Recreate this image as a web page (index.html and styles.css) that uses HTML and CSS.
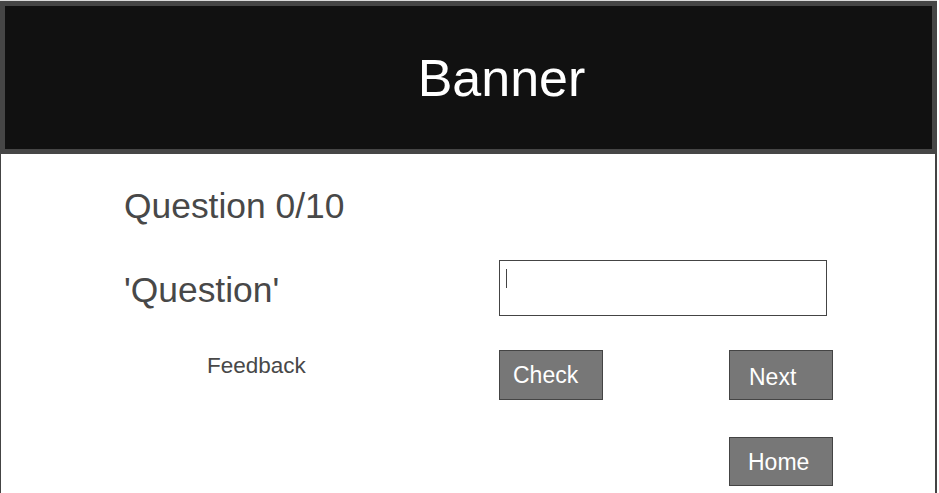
FILE: index.html
```html
<!DOCTYPE html>
<html lang="en">
<head>
<meta charset="utf-8">
<title>Quiz</title>
<link rel="stylesheet" href="styles.css">
</head>
<body>
<div class="page">
  <header class="banner">
    <h1 class="banner-title">Banner</h1>
  </header>
  <main class="content">
    <div class="counter">Question 0/10</div>
    <div class="row row-question">
      <div class="col-left"><div class="question">'Question'</div></div>
      <div class="answer"><span class="caret"></span></div>
    </div>
    <div class="row row-actions">
      <div class="col-left"><div class="feedback">Feedback</div></div>
      <div class="col-mid"><button class="btn btn-check">Check</button></div>
      <div class="col-right"><button class="btn btn-next">Next</button></div>
    </div>
    <div class="row row-home">
      <div class="col-left"></div>
      <div class="col-mid"></div>
      <div class="col-right"><button class="btn btn-home">Home</button></div>
    </div>
  </main>
</div>
</body>
</html>
```

FILE: styles.css
```css
html, body {
  margin: 0;
  padding: 0;
  background: #ffffff;
}
body {
  font-family: "Liberation Sans", Arial, sans-serif;
  color: #484848;
  overflow: hidden;
}
.page {
  width: 937px;
  border-top: 1px solid #dcdcdc;
  display: flex;
  flex-direction: column;
}
.banner {
  box-sizing: border-box;
  height: 153px;
  background: #111111;
  border: 5px solid #464646;
  display: flex;
  align-items: center;
  justify-content: center;
  padding-left: 66px;
}
.banner-title {
  margin: 0;
  font-weight: normal;
  font-size: 52px;
  line-height: 58px;
  color: #ffffff;
}
.content {
  box-sizing: border-box;
  height: 340px;
  border-left: 1px solid #444444;
  border-right: 2px solid #444444;
  padding-left: 123px;
  padding-top: 32px;
}
.counter {
  font-size: 35.4px;
  line-height: 40px;
}
.row {
  display: flex;
  align-items: flex-start;
}
.col-left { width: 375px; }
.col-mid { width: 230px; }
.col-right { width: 104px; }
.row-question { margin-top: 34px; }
.question {
  font-size: 35.4px;
  line-height: 40px;
  margin-top: 10px;
}
.answer {
  box-sizing: border-box;
  width: 328px;
  height: 56px;
  border: 1px solid #444444;
  background: #ffffff;
  padding: 8px 0 0 6px;
}
.caret {
  display: block;
  width: 1px;
  height: 19px;
  background: #444444;
}
.row-actions { margin-top: 34px; }
.feedback {
  font-size: 22.5px;
  line-height: 26px;
  margin-top: 3px;
  margin-left: 83px;
}
.btn {
  box-sizing: border-box;
  width: 104px;
  height: 50px;
  background: #777777;
  border: 1px solid #444444;
  border-radius: 0;
  color: #ffffff;
  font-family: "Liberation Sans", Arial, sans-serif;
  font-size: 23px;
  line-height: 26px;
  text-align: left;
  margin: 0;
  display: block;
}
.btn-check { padding: 11px 0 11px 13px; }
.btn-next { padding: 13px 0 9px 19px; }
.row-home { margin-top: 37px; }
.btn-home { height: 49px; padding: 11px 0 10px 18px; }
```
